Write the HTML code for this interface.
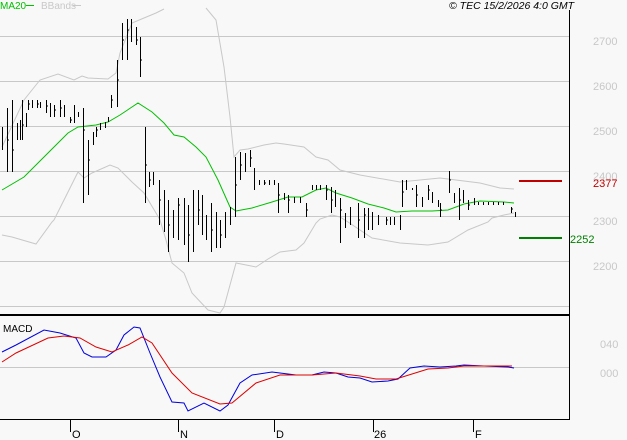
<!DOCTYPE html>
<html><head><meta charset="utf-8"><style>
html,body{margin:0;padding:0;background:#f8f8f8;}
svg{display:block}
text{font-family:"Liberation Sans",sans-serif;}
</style></head><body>
<svg width="627" height="440" viewBox="0 0 627 440" xmlns="http://www.w3.org/2000/svg">
<rect width="627" height="440" fill="#f8f8f8"/>
<!-- grid -->
<g stroke="#c8c8c8" stroke-width="1">
<line x1="0" y1="36.5" x2="569" y2="36.5"/>
<line x1="0" y1="81.5" x2="569" y2="81.5"/>
<line x1="0" y1="126.5" x2="569" y2="126.5"/>
<line x1="0" y1="171.5" x2="569" y2="171.5"/>
<line x1="0" y1="216.5" x2="569" y2="216.5"/>
<line x1="0" y1="261.5" x2="569" y2="261.5"/>
<line x1="0" y1="306.5" x2="569" y2="306.5"/>
<line x1="0" y1="367.5" x2="569" y2="367.5"/>
</g>
<!-- bands -->
<g fill="none" stroke="#c8c8c8" stroke-width="1">
<polyline points="2,147 24,100 40,80 58,74 74,80 82,76 88,78 108,79 116,73 120,53 132,23 144,18 156,13 164,9"/>
<polyline points="206,8 216,20 224,67 230,117 234,157 240,150 248,149 264,145 276,143 284,144 304,147 316,157 328,160 340,170 360,175 400,182 440,178 480,183 500,188 514,189"/>
<polyline points="2,235 12,237 36,244 52,222 54,220 64,200 78,172 84,178 92,173 110,165 118,168 132,182 144,193 156,213 160,220 166,240 172,263 184,273 192,293 208,310 220,313 224,307 236,263 256,267 268,259 280,252 296,250 304,243 316,223 320,219 332,215 340,217 348,222 360,230 372,238 400,243 428,245 448,242 468,230 488,222 492,218 504,215 514,213"/>
</g>
<!-- MA20 -->
<polyline fill="none" stroke="#00c000" stroke-width="1" points="2,190 24,177 48,153 68,133 78,127 96,125 108,122 120,115 138,103 152,112 164,123 174,135 184,137 196,147 206,157 218,180 230,207 236,211 252,208 272,202 288,197 302,197 316,190 326,188 336,193 352,198 368,204 384,208 396,212 412,211 432,211 448,210 464,204 480,201 504,202 514,203"/>
<!-- bars -->
<path fill="none" stroke="#000" stroke-width="1" d="
M2.5 127V150M7.5 108V172M12.5 100V172M17.5 123V140M20.5 120V140M22.5 100V140M26.5 113V127M28.5 100V110M32.5 100V108M37.5 100V108M40.5 102V108M46.5 100V113M50.5 103V117M54.5 105V117M60.5 100V117M64.5 105V117M70.5 117V123M74.5 105V123M78.5 112V117M83.5 108V203M88.5 140V195M93.5 132V145M96.5 127V137M100.5 123V130M105.5 122V128M108.5 117V122M111.5 95V108M117.5 60V107M122.5 23V60M127.5 19V60M131.5 19V42M136.5 27V45M140.5 37V77M145.5 127V203M149.5 172V187M153.5 172V185M159.5 180V225M164.5 190V232M168.5 200V252M173.5 210V238M178.5 198V240M184.5 198V245M188.5 205V262M193.5 190V252M198.5 190V225M202.5 195V235M206.5 215V240M211.5 203V252M216.5 212V248M220.5 220V248M225.5 212V238M230.5 207V225M235.5 157V217M240.5 152V180M245.5 153V172M250.5 150V167M254.5 168V190M259.5 180V185M264.5 180V185M269.5 180V185M274.5 180V185M278.5 183V213M284.5 193V200M288.5 195V213M294.5 197V203M300.5 197V203M306.5 203V217M312.5 185V190M316.5 185V190M320.5 185V190M326.5 185V200M331.5 187V213M335.5 190V207M340.5 198V243M345.5 213V228M350.5 207V225M358.5 203V238M364.5 208V238M368.5 208V230M372.5 212V230M378.5 215V225M386.5 217V225M390.5 217V225M394.5 217V225M400.5 215V230M402.5 180V207M406.5 180V190M412.5 188V190M416.5 185V207M422.5 197V207M428.5 185V200M432.5 192V203M438.5 200V207M440.5 203V217M449.5 171V193M454.5 193V203M459.5 188V220M463.5 190V203M468.5 200V210M474.5 198V205M478.5 202V205M483.5 202V205M488.5 202V205M493.5 202V205M498.5 202V205M503.5 202V205M511.5 207V213M515.5 212V217"/>
<path fill="none" stroke="#000" stroke-width="1" d="
M7 140h2M12 150h2M22 125h2M28 104h2M37 104h2M46 106h2M54 110h2M60 108h2M70 120h2M83 130h2M88 160h2M96 130h2M111 100h2M117 80h2M122 40h2M127 30h2M136 40h2M140 60h2M145 165h2M149 180h2M159 200h2M168 225h2M178 205h2M188 235h2M198 210h2M211 230h2M220 235h2M235 185h2M240 165h2M250 158h2M264 183h2M278 195h2M288 200h2M306 210h2M326 190h2M331 200h2M340 210h2M358 220h2M364 215h2M386 220h2M402 192h2M416 195h2M428 190h2M440 210h2M449 180h2M459 200h2M468 205h2M511 209h2"/>
<!-- markers -->
<line x1="519" y1="181" x2="562" y2="181" stroke="#c00000" stroke-width="2"/>
<line x1="519" y1="238" x2="562" y2="238" stroke="#008000" stroke-width="2"/>
<!-- MACD -->
<polyline fill="none" stroke="#0000dd" stroke-width="1" points="2,352 16,345 44,330 60,333 76,338 84,353 92,357 106,357 116,350 124,335 134,327 140,328 150,353 160,377 172,402 184,403 188,411 204,403 220,411 228,405 240,383 252,375 272,372 288,374 296,375 312,375 324,372 336,373 348,377 360,378 372,382 388,381 398,379 410,368 424,366 440,367 456,366 464,365 484,366 508,367 514,368"/>
<polyline fill="none" stroke="#dd0000" stroke-width="1" points="2,362 16,353 48,338 64,336 80,338 96,347 112,352 128,345 142,337 152,343 172,373 192,393 220,404 232,403 256,383 280,375 312,375 336,373 360,376 376,379 396,379 428,369 448,368 464,366 512,366"/>
<!-- frame -->
<line x1="0" y1="315" x2="570" y2="315" stroke="#000" stroke-width="2"/>
<line x1="569.5" y1="10" x2="569.5" y2="420" stroke="#000" stroke-width="1"/>
<line x1="0" y1="419.5" x2="570" y2="419.5" stroke="#000" stroke-width="1"/>
<g stroke="#000" stroke-width="1">
<line x1="70.5" y1="420" x2="70.5" y2="432"/>
<line x1="178.5" y1="420" x2="178.5" y2="432"/>
<line x1="274.5" y1="420" x2="274.5" y2="432"/>
<line x1="373.5" y1="420" x2="373.5" y2="432"/>
<line x1="473.5" y1="420" x2="473.5" y2="432"/>
</g>
<g font-size="11" fill="#000">
<text x="72" y="438">O</text>
<text x="180" y="438">N</text>
<text x="276" y="438">D</text>
<text x="374" y="438">26</text>
<text x="475" y="438">F</text>
<text x="3" y="332" font-size="10">MACD</text>
</g>
<g font-size="11" fill="#c8c8c8">
<text x="593" y="45">2700</text>
<text x="593" y="90">2600</text>
<text x="593" y="135">2500</text>
<text x="593" y="180">2400</text>
<text x="593" y="225">2300</text>
<text x="593" y="270">2200</text>
<text x="600" y="348">040</text>
<text x="600" y="377">000</text>
</g>
<text x="593" y="187" font-size="11" fill="#c00000">2377</text>
<text x="570" y="243" font-size="11" fill="#008000">2252</text>
<text x="0" y="9" font-size="10" fill="#00c000">MA20</text>
<line x1="26" y1="5.5" x2="34" y2="5.5" stroke="#00c000"/>
<text x="41" y="9" font-size="10" fill="#c8c8c8">BBands</text>
<line x1="73" y1="5.5" x2="81" y2="5.5" stroke="#c8c8c8"/>
<text x="449" y="9" font-size="10.5" font-style="italic" fill="#000">© TEC 15/2/2026 4:0 GMT</text>
</svg>
</body></html>
